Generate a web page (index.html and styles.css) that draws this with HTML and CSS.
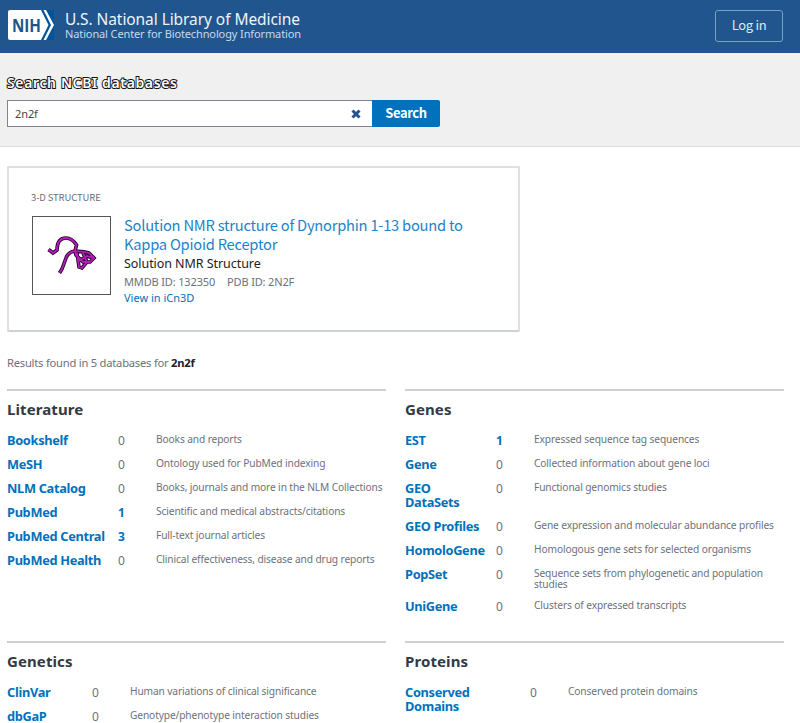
FILE: index.html
```html
<!DOCTYPE html>
<html lang="en">
<head>
<meta charset="utf-8">
<title>2n2f - Search NCBI databases</title>
<link rel="stylesheet" href="styles.css">
</head>
<body>
<header class="top">
  <svg class="logo" width="48" height="32" viewBox="0 0 48 32">
    <rect x="30" width="16" height="30" y="0" fill="#00549a"/>
    <path d="M2 0H33L40.500 15 33 30H2Q0 30 0 28V2Q0 0 2 0Z" fill="#fff"/>
    <path d="M35.500 0H38L46 15 38 30H35.500L43 15Z" fill="#fff"/>
    <text class="logo-text" x="4" y="21.500" textLength="29" lengthAdjust="spacingAndGlyphs">NIH</text>
  </svg>
  <div class="brand">
    <div class="brand-main">U.S. National Library of Medicine</div>
    <div class="brand-sub">National Center for Biotechnology Information</div>
  </div>
  <a class="login">Log in</a>
</header>
<section class="search">
  <h1 class="search-title">Search NCBI databases</h1>
  <div class="search-form">
    <div class="field"><span class="query">2n2f</span>
      <svg class="clear" width="10" height="10" viewBox="0 0 10 10"><path d="M1.500 1.500L8.500 8.500M8.500 1.500L1.500 8.500" stroke="#285291" stroke-width="3"/></svg>
    </div>
    <button class="go">Search</button>
  </div>
</section>
<main>
  <article class="card">
    <div class="kind">3-D STRUCTURE</div>
    <div class="card-body">
      <div class="thumb">
        <svg width="77" height="77" viewBox="0 0 77 77">
          <path class="tube-edge" d="M15.500 32.500L20 36 24 33Q24 21 33 21Q39 21 43.500 28L42 34Q35 35 33 41L29 52 26.500 56M42 34.500Q50 34 56 36L61 41 57 45 50 45 43 38 42 34.500M44 36L46 50 49 51 54 45 50 36M46 44L54 39 60 41"/>
          <path class="tube-fill" d="M15.500 32.500L20 36 24 33Q24 21 33 21Q39 21 43.500 28L42 34Q35 35 33 41L29 52 26.500 56M42 34.500Q50 34 56 36L61 41 57 45 50 45 43 38 42 34.500M44 36L46 50 49 51 54 45 50 36M46 44L54 39 60 41"/>
        </svg>
      </div>
      <div class="info">
        <a class="card-title">Solution NMR structure of Dynorphin 1-13 bound to<br>Kappa Opioid Receptor</a>
        <div class="method">Solution NMR Structure</div>
        <div class="ids"><span class="mmdb">MMDB ID: 132350</span><span class="pdb">PDB ID: 2N2F</span></div>
        <a class="view">View in iCn3D</a>
      </div>
    </div>
  </article>
  <p class="found">Results found in 5 databases for <b>2n2f</b></p>
  <div class="groups">
    <section class="group literature">
      <h2>Literature</h2>
      <div class="row"><a>Bookshelf</a><i>0</i><span>Books and reports</span></div>
      <div class="row"><a>MeSH</a><i>0</i><span>Ontology used for PubMed indexing</span></div>
      <div class="row"><a>NLM Catalog</a><i>0</i><span>Books, journals and more in the NLM Collections</span></div>
      <div class="row"><a>PubMed</a><i class="hit">1</i><span>Scientific and medical abstracts/citations</span></div>
      <div class="row"><a>PubMed Central</a><i class="hit">3</i><span>Full-text journal articles</span></div>
      <div class="row"><a>PubMed Health</a><i>0</i><span>Clinical effectiveness, disease and drug reports</span></div>
    </section>
    <section class="group genes">
      <h2>Genes</h2>
      <div class="row"><a>EST</a><i class="hit">1</i><span>Expressed sequence tag sequences</span></div>
      <div class="row"><a>Gene</a><i>0</i><span>Collected information about gene loci</span></div>
      <div class="row"><a>GEO<br>DataSets</a><i>0</i><span>Functional genomics studies</span></div>
      <div class="row"><a>GEO Profiles</a><i>0</i><span>Gene expression and molecular abundance profiles</span></div>
      <div class="row"><a>HomoloGene</a><i>0</i><span>Homologous gene sets for selected organisms</span></div>
      <div class="row"><a>PopSet</a><i>0</i><span>Sequence sets from phylogenetic and population<br>studies</span></div>
      <div class="row"><a>UniGene</a><i>0</i><span>Clusters of expressed transcripts</span></div>
    </section>
    <section class="group genetics">
      <h2>Genetics</h2>
      <div class="row"><a>ClinVar</a><i>0</i><span>Human variations of clinical significance</span></div>
      <div class="row"><a>dbGaP</a><i>0</i><span>Genotype/phenotype interaction studies</span></div>
    </section>
    <section class="group proteins">
      <h2>Proteins</h2>
      <div class="row"><a>Conserved<br>Domains</a><i>0</i><span>Conserved protein domains</span></div>
    </section>
  </div>
</main>
</body>
</html>
```
FILE: styles.css
```css
* { box-sizing: border-box; }
html, body { height: 723px; overflow: hidden; }
body { margin: 0; background: #fff; color: #212121; font-family: "Noto Sans", sans-serif; }
h1, h2, p { margin: 0; }
.top { height: 53px; background: #20558e; display: flex; align-items: flex-start; padding: 10px 17px 0 8px; color: #fff; }
.logo { flex: none; }
.logo-text { font: bold 18px "Open Sans", sans-serif; fill: #20558a; }
.brand { margin-left: 9px; }
.brand-main { font-size: 15.500px; line-height: 19px; letter-spacing: -.07px; color: #edf4fb; white-space: nowrap; }
.brand-sub { font-size: 11px; line-height: 12px; margin-top: -1px; letter-spacing: -.12px; color: #c4dbef; white-space: nowrap; }
.login { margin-left: auto; width: 68px; height: 32px; border: 1px solid #7c9fc4; border-radius: 3px; font: 13px/28px "Noto Sans CJK SC", sans-serif; letter-spacing: -.3px; text-align: center; color: #dce8f4; }
.search { height: 94px; background: #f0f0f0; border-bottom: 1px solid #dcdcdc; padding: 20px 7px 0; }
.search-title { font-size: 14px; line-height: 20px; letter-spacing: .63px; color: #fff; -webkit-text-stroke: 2px #111; paint-order: stroke fill; font-weight: 600; white-space: nowrap; }
.search-form { display: flex; margin-top: 7px; height: 27px; }
.field { width: 365px; border: 1px solid #80858c; border-right: 0; background: #fff; display: flex; align-items: center; justify-content: space-between; padding: 0 11px 0 7px; }
.query { font-size: 11px; letter-spacing: -.1px; color: #444; }
.go { width: 68px; padding: 0 0 1px; border: 0; border-radius: 0 2px 2px 0; background: #0071bc; color: #fff; font: bold 13px/24px "Noto Sans CJK SC", sans-serif; letter-spacing: -.4px; }
.card { margin: 19px 0 0 7px; width: 513px; height: 166px; border: 2px solid #dfe0e1; border-bottom-color: #cfd2d5; border-radius: 2px; padding: 22px 0 0 23px; }
.kind { margin-left: -1px; font: 9.500px/14px "Noto Sans CJK SC", sans-serif; letter-spacing: -.13px; color: #6b7079; }
.card-body { display: flex; margin-top: 12px; }
.thumb { width: 79px; height: 79px; border: 1px solid #555; }
.thumb svg { display: block; }
.tube-edge { fill: none; stroke: #210027; stroke-width: 3.600; }
.tube-fill { fill: none; stroke: #b51db9; stroke-width: 1.800; }
.info { margin-left: 13px; margin-top: -1px; white-space: nowrap; }
.card-title { display: block; font: 14.700px/19px "Noto Sans CJK SC", sans-serif; letter-spacing: -.23px; color: #1f83c8; }
.method { margin-top: 1px; font-size: 12.500px; line-height: 20px; letter-spacing: -.06px; }
.ids { display: flex; gap: 12px; font-size: 11px; line-height: 16px; letter-spacing: -.15px; color: #6c717a; }
.view { display: block; font-size: 11px; line-height: 15px; color: #0071bc; }
.found { margin: 22px 0 0 7px; font-size: 11.200px; line-height: 17px; letter-spacing: -.23px; color: #6c717a; }
.found b { color: #222; }
.groups { display: grid; grid-template-columns: 379px 379px; column-gap: 19px; row-gap: 23px; padding: 18px 0 0 7px; }
.group { border-top: 2px solid #cfd0d2; padding-top: 8px; }
.group h2 { font-size: 15px; line-height: 20px; margin-bottom: 9px; letter-spacing: .1px; color: #323a45; }
.row { display: grid; padding: 5px 0; white-space: nowrap; align-items: start; }
.row a { font-size: 12.800px; line-height: 14px; font-weight: bold; letter-spacing: -.32px; color: #0071bc; }
.row i { font-size: 12px; line-height: 14px; margin: 1px 0 -1px; font-style: normal; color: #6c717a; }
.row .hit { color: #0071bc; font-weight: bold; }
.row span { font-size: 10.200px; line-height: 11px; margin: 1px 0 -1px; letter-spacing: -.12px; color: #6c717a; }
.literature .row { grid-template-columns: 111px 38px 1fr; }
.genes .row { grid-template-columns: 91px 38px 1fr; }
.genetics .row { grid-template-columns: 85px 38px 1fr; }
.proteins .row { grid-template-columns: 125px 38px 1fr; }
```
